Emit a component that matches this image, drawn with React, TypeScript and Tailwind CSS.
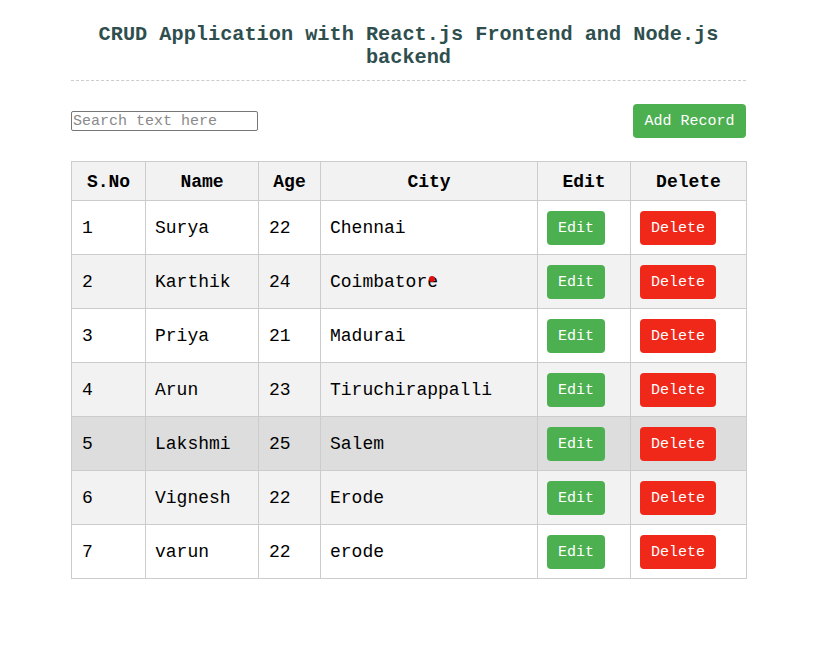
import React from "react";

const rows = [
  { id: 1, name: "Surya", age: 22, city: "Chennai" },
  { id: 2, name: "Karthik", age: 24, city: "Coimbatore" },
  { id: 3, name: "Priya", age: 21, city: "Madurai" },
  { id: 4, name: "Arun", age: 23, city: "Tiruchirappalli" },
  { id: 5, name: "Lakshmi", age: 25, city: "Salem" },
  { id: 6, name: "Vignesh", age: 22, city: "Erode" },
  { id: 7, name: "varun", age: 22, city: "erode" },
];

export default function App() {
  return (
    <div
      className="min-h-[668px] w-[836px] bg-white"
      style={{ fontFamily: '"Liberation Mono", "Courier New", monospace' }}
    >
      <div className="ml-[71px] w-[675px] pt-[23px]">
        <h2 className="border-b border-dashed border-[#cccccc] pb-[11px] text-center text-[20.25px] font-bold leading-[23px] text-[#2f4f4f]">
          CRUD Application with React.js Frontend and Node.js backend
        </h2>

        <div className="mt-[23px] flex items-center justify-between">
          <input
            type="text"
            placeholder="Search text here"
            className="h-[20px] w-[187px] rounded-[2px] border border-[#767676] px-[1px] pt-[1px] text-[15px] leading-[18px] text-black outline-none placeholder:text-[#8a8a8a]"
            style={{ fontFamily: '"Liberation Mono", "Courier New", monospace' }}
          />
          <button className="h-[34px] w-[113px] rounded-[4px] bg-[#4caf50] pt-[3px] text-[15px] text-white">
            Add Record
          </button>
        </div>

        <table className="mt-[23px] w-[675px] table-fixed border-collapse text-[18px] text-black">
          <colgroup>
            <col className="w-[74px]" />
            <col className="w-[113px]" />
            <col className="w-[62px]" />
            <col className="w-[217px]" />
            <col className="w-[93px]" />
            <col className="w-[116px]" />
          </colgroup>
          <thead>
            <tr className="h-[39px] bg-[#f2f2f2]">
              {["S.No", "Name", "Age", "City", "Edit", "Delete"].map((h) => (
                <th
                  key={h}
                  className="border border-[#cccccc] p-0 pt-[1px] text-center font-bold leading-[20px]"
                >
                  {h}
                </th>
              ))}
            </tr>
          </thead>
          <tbody>
            {rows.map((r, i) => {
              const bg =
                r.id === 5 ? "bg-[#dddddd]" : i % 2 === 1 ? "bg-[#f2f2f2]" : "bg-white";
              return (
                <tr key={r.id} className={`h-[54px] ${bg}`}>
                  <td className="border border-[#cccccc] px-[10px] py-0 leading-[20px]">{r.id}</td>
                  <td className="border border-[#cccccc] px-[9px] py-0 leading-[20px]">{r.name}</td>
                  <td className="border border-[#cccccc] px-[10px] py-0 leading-[20px]">{r.age}</td>
                  <td className="border border-[#cccccc] px-[9px] py-0 leading-[20px]">
                    <span className="relative">
                      {r.city}
                      {r.id === 2 && (
                        <span className="absolute left-[99px] top-[4px] h-[6px] w-[6px] rounded-full bg-[#e01010]" />
                      )}
                    </span>
                  </td>
                  <td className="border border-[#cccccc] px-[9px] py-0">
                    <button className="flex h-[34px] w-[58px] items-center justify-center rounded-[4px] bg-[#4caf50] pt-[3px] text-[15px] text-white">
                      Edit
                    </button>
                  </td>
                  <td className="border border-[#cccccc] px-[9px] py-0">
                    <button className="flex h-[34px] w-[76px] items-center justify-center rounded-[4px] bg-[#f0281a] pt-[3px] text-[15px] text-white">
                      Delete
                    </button>
                  </td>
                </tr>
              );
            })}
          </tbody>
        </table>
      </div>
    </div>
  );
}
